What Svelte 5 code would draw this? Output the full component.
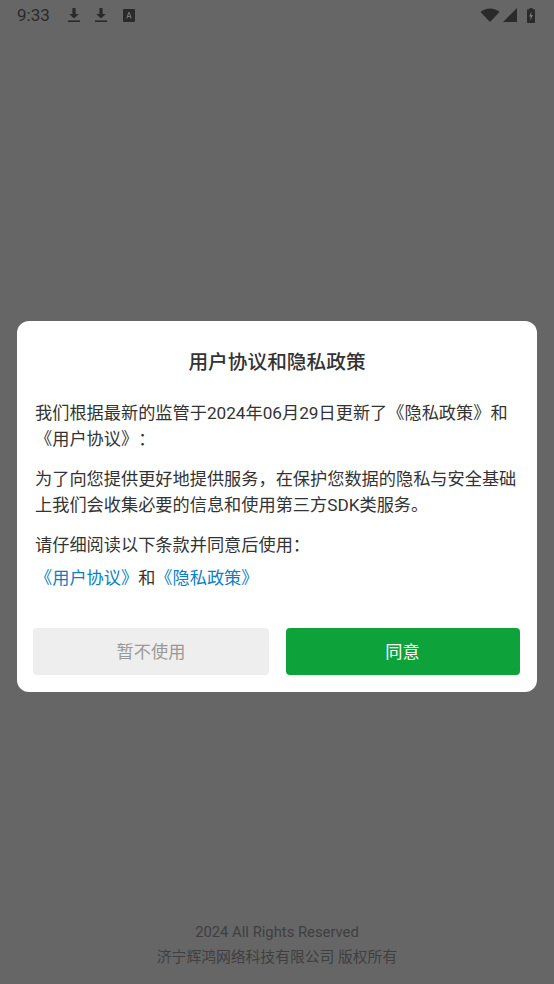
<script>
    const leftIcons = ['download', 'download', 'font'];
</script>

<div class="page">
    <header class="status-bar">
        <div class="status-left">
            <span class="time">9:33</span>
            {#each leftIcons as icon}
                {#if icon === 'download'}
                    <svg class="dl" viewBox="0 0 14 16" width="14" height="16">
                        <path d="M5.400 1h3.200v6h3.200L7 11.600 2.200 7h3.200z" fill="#2a2a2a" />
                        <rect x="1" y="13.400" width="12" height="1.600" fill="#2a2a2a" />
                    </svg>
                {:else}
                    <svg class="font-icon" viewBox="0 0 12 13" width="12" height="13">
                        <rect width="12" height="13" rx="1" fill="#2a2a2a" />
                        <path d="M3.200 9.400 5.400 3h1.200l2.200 6.400H7.700l-.5-1.500H4.800l-.5 1.500zM5.100 7h1.800L6 4.300z" fill="#777" />
                    </svg>
                {/if}
            {/each}
        </div>
        <div class="status-right">
            <svg viewBox="0 0 20 14" width="20" height="14">
                <path d="M0.500 4C3 1.800 6.400 .5 10 .5s7 1.300 9.500 3.500L10 14z" fill="#2a2a2a" />
            </svg>
            <svg viewBox="0 0 14 14" width="14" height="14">
                <path d="M14 0v14H0z" fill="#2a2a2a" />
            </svg>
            <svg class="battery" viewBox="0 0 8 15" width="8" height="15">
                <path d="M2.500 0h3v1.300h1.700c.4 0 .8.400.8.800V14c0 .6-.4 1-1 1H1c-.6 0-1-.4-1-1V2.100c0-.4.4-.8.8-.8h1.700z" fill="#2a2a2a" />
                <path d="M4.500 3.500 2 8.500h1.600L3.300 12.500 6 7H4.200z" fill="#777" />
            </svg>
        </div>
    </header>

    <main class="center">
        <section class="dialog">
            <h2 class="title">用户协议和隐私政策</h2>
            <div class="body">
                <p>我们根据最新的监管于2024年06月29日更新了《隐私政策》和《用户协议》：</p>
                <p>为了向您提供更好地提供服务，在保护您数据的隐私与安全基础上我们会收集必要的信息和使用第三方SDK类服务。</p>
                <p class="tight">请仔细阅读以下条款并同意后使用：</p>
                <p class="links"><span class="link">《用户协议》</span>和<span class="link">《隐私政策》</span></p>
            </div>
            <div class="actions">
                <button class="btn later">暂不使用</button>
                <button class="btn agree">同意</button>
            </div>
        </section>
    </main>

    <footer class="footer">
        <div>2024 All Rights Reserved</div>
        <div>济宁辉鸿网络科技有限公司 版权所有</div>
    </footer>
</div>

<style>
    :global(body) {
        margin: 0;
        background: #666;
    }

    .page {
        height: 984px;
        width: 554px;
        display: flex;
        flex-direction: column;
        background: #666666;
        font-family: Roboto, "Noto Sans CJK SC", sans-serif;
        overflow: hidden;
    }

    .status-bar {
        height: 30px;
        display: flex;
        justify-content: space-between;
        align-items: center;
        padding: 0 19px 0 17px;
        color: #2a2a2a;
    }

    .status-left {
        display: flex;
        align-items: center;
    }

    .time {
        font-size: 17px;
        font-weight: 400;
        width: 49.500px;
    }

    .dl {
        margin-right: 13px;
    }

    .font-icon {
        margin-left: 2px;
    }

    .status-right {
        display: flex;
        align-items: center;
        gap: 3px;
    }

    .battery {
        margin-left: 7px;
    }

    .center {
        height: 662px;
        padding-top: 291px;
        padding-left: 17px;
        box-sizing: border-box;
    }

    .dialog {
        width: 520px;
        height: 371px;
        background: #fff;
        border-radius: 12px;
        box-sizing: border-box;
        padding: 28px 18px 17px;
        display: flex;
        flex-direction: column;
    }

    .title {
        margin: 0;
        font-size: 19.700px;
        font-weight: 500;
        line-height: 28px;
        text-align: center;
        color: #333;
    }

    .body {
        margin-top: 23px;
        flex: 1;
        font-size: 17.200px;
        line-height: 26px;
        color: #333;
        text-spacing-trim: space-all;
    }

    .body p {
        margin: 0 0 14px;
    }

    .body p.tight {
        margin-bottom: 7px;
    }

    .link {
        color: #0b80c4;
    }

    .actions {
        display: flex;
        justify-content: space-between;
        margin: 0 -0.500px 0 -2px;
    }

    .btn {
        height: 47px;
        border: none;
        border-radius: 4px;
        font-family: inherit;
        font-size: 17.200px;
        padding: 0 0 2px;
    }

    .later {
        width: 236px;
        background: #eeeeee;
        color: #999;
    }

    .agree {
        width: 234px;
        background: #0da33a;
        color: #fff;
    }

    .footer {
        padding-top: 228px;
        text-align: center;
        font-size: 14.800px;
        line-height: 25px;
        color: #3f3f3f;
    }
</style>
